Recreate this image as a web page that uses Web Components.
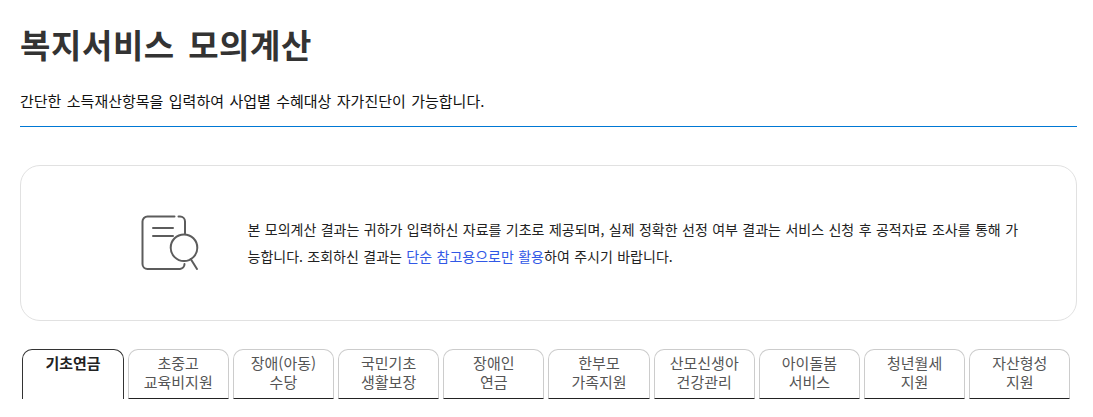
<!DOCTYPE html>
<html lang="ko">
<head>
<meta charset="utf-8">
<title>복지서비스 모의계산</title>
<style>
  html, body { margin: 0; background: #fff; height: 417px; overflow: hidden; }
  body { font-family: "Noto Sans CJK KR", "Noto Sans", sans-serif; }
</style>
</head>
<body>
<calc-page>
  <page-header slot="header" heading="복지서비스 모의계산">간단한 소득재산항목을 입력하여 사업별 수혜대상 자가진단이 가능합니다.</page-header>
  <notice-box slot="notice">본 모의계산 결과는 귀하가 입력하신 자료를 기초로 제공되며, 실제 정확한 선정 여부 결과는 서비스 신청 후 공적자료 조사를 통해 가능합니다. 조회하신 결과는 <em>단순 참고용으로만 활용</em>하여 주시기 바랍니다.</notice-box>
  <tab-bar slot="tabs">
    <tab-item active>기초연금</tab-item>
    <tab-item>초중고<br>교육비지원</tab-item>
    <tab-item>장애(아동)<br>수당</tab-item>
    <tab-item>국민기초<br>생활보장</tab-item>
    <tab-item>장애인<br>연금</tab-item>
    <tab-item>한부모<br>가족지원</tab-item>
    <tab-item>산모신생아<br>건강관리</tab-item>
    <tab-item>아이돌봄<br>서비스</tab-item>
    <tab-item>청년월세<br>지원</tab-item>
    <tab-item>자산형성<br>지원</tab-item>
  </tab-bar>
</calc-page>

<script>
/**
 * Page frame, keeps the three sections in a column.
 */
class CalcPage extends HTMLElement {
  constructor () {
    super()
    this.attachShadow({ mode: 'open' })
    this.shadowRoot.innerHTML = `
      <style>
        :host { display: block; padding: 0 16px 0 20px; }
        .notice { display: block; margin-top: 38px; }
        .tabs { display: block; margin-top: 28px; }
      </style>
      <slot name="header"></slot>
      <div class="notice"><slot name="notice"></slot></div>
      <div class="tabs"><slot name="tabs"></slot></div>
    `
  }
}

/**
 * Title and intro line with the blue rule under it.
 */
class PageHeader extends HTMLElement {
  constructor () {
    super()
    this.attachShadow({ mode: 'open' })
    this.shadowRoot.innerHTML = `
      <style>
        :host { display: block; border-bottom: 1px solid #0078d4; height: 127px; box-sizing: border-box; }
        h1 {
          margin: 0;
          padding-top: 22px;
          font-size: 33px;
          line-height: 44px;
          font-weight: 700;
          color: #333;
          letter-spacing: 0.6px;
          word-spacing: 3.500px;
        }
        p {
          margin: 24px 0 0;
          font-size: 15px;
          line-height: 22px;
          color: #111;
          word-spacing: 1.200px;
        }
      </style>
      <h1></h1>
      <p><slot></slot></p>
    `
    this.shadowRoot.querySelector('h1').textContent = this.getAttribute('heading')
  }
}

/**
 * Rounded notice with the document search icon.
 */
class NoticeBox extends HTMLElement {
  constructor () {
    super()
    this.attachShadow({ mode: 'open' })
    this.shadowRoot.innerHTML = `
      <style>
        :host {
          display: flex;
          align-items: center;
          box-sizing: border-box;
          height: 156px;
          border: 1px solid #e1e1e1;
          border-radius: 20px;
          padding: 0 56px 0 119px;
          gap: 47.500px;
          font-size: 14px;
          line-height: 27px;
          color: #222;
          word-spacing: 0.500px;
        }
        svg { flex: none; width: 60px; height: 60px; }
        p { margin: 0; }
        ::slotted(em) { font-style: normal; color: #3158e6; }
      </style>
      <svg viewBox="0 0 60 60" fill="none" stroke="#5c5c5c" stroke-width="2" stroke-linecap="round">
        <path d="M34.500 3.500H7.500a5 5 0 0 0-5 5v42.500a5 5 0 0 0 5 5H40a5 5 0 0 0 4.500-5"/>
        <path d="M38.500 3.500H40a5 5 0 0 1 5 5v12"/>
        <path d="M13 15h20M13 23h20"/>
        <circle cx="44" cy="34.700" r="13.300"/>
        <path d="M50.700 46l6.300 10"/>
      </svg>
      <p><slot></slot></p>
    `
  }
}

/**
 * Row of tabs.
 */
class TabBar extends HTMLElement {
  constructor () {
    super()
    this.attachShadow({ mode: 'open' })
    this.shadowRoot.innerHTML = `
      <style>
        :host { display: flex; gap: 4px; padding: 0 6.600px 0 2.400px; }
      </style>
      <slot></slot>
    `
  }
}

/**
 * One tab, the active one is bold with a dark outline.
 */
class TabItem extends HTMLElement {
  constructor () {
    super()
    this.attachShadow({ mode: 'open' })
    this.shadowRoot.innerHTML = `
      <style>
        :host {
          flex: 1 1 0;
          display: block;
          box-sizing: border-box;
          height: 50px;
          border: 1px solid #ccc;
          border-bottom: 1px solid #222;
          border-radius: 10px 10px 0 0;
          padding-top: 2.500px;
          text-align: center;
          font-size: 15px;
          line-height: 19px;
          color: #555;
        }
        :host([active]) {
          border-color: #333;
          border-bottom: 0;
          font-weight: 700;
          color: #222;
        }
      </style>
      <slot></slot>
    `
  }
}

customElements.define('calc-page', CalcPage)
customElements.define('page-header', PageHeader)
customElements.define('notice-box', NoticeBox)
customElements.define('tab-bar', TabBar)
customElements.define('tab-item', TabItem)
</script>
</body>
</html>
